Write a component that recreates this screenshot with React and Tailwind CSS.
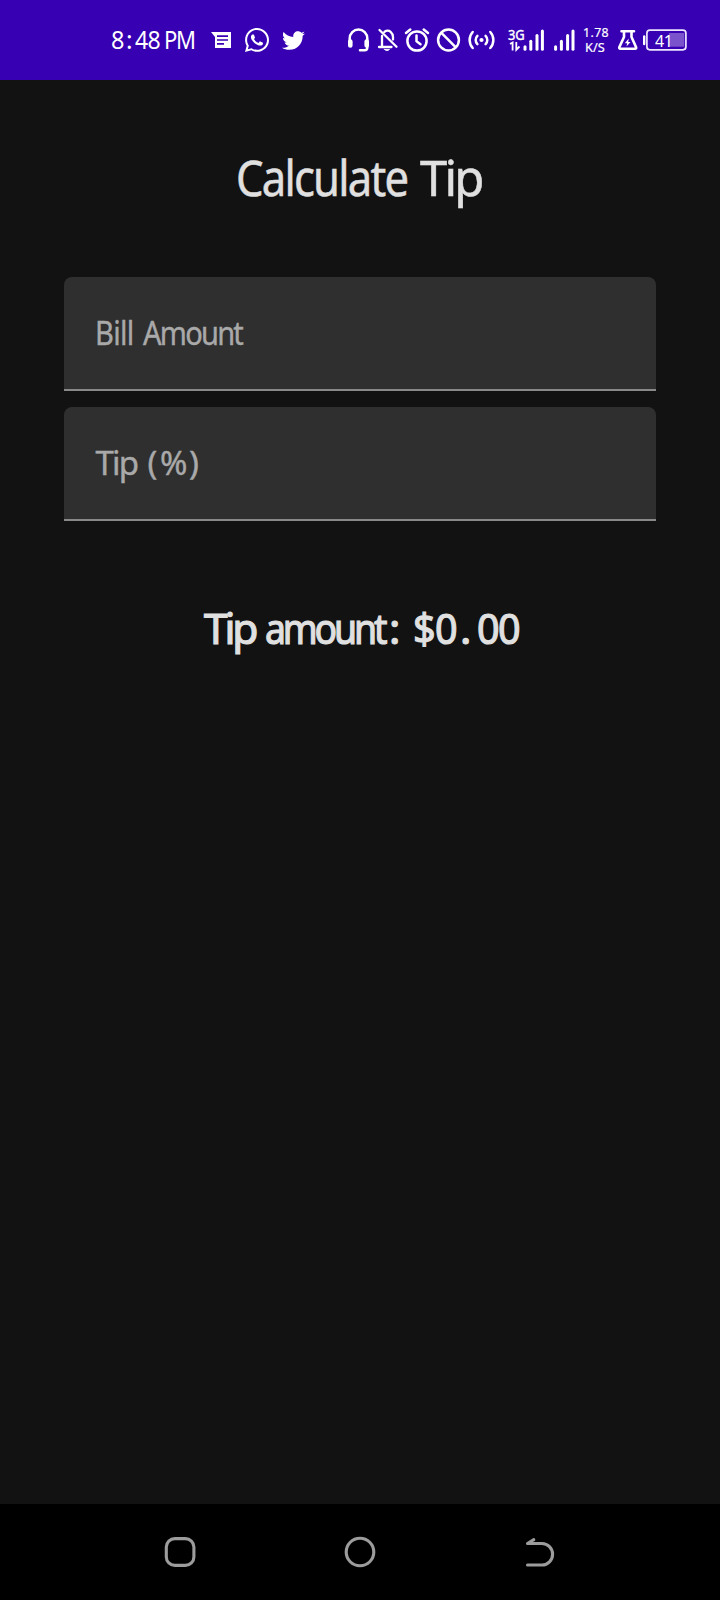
import React from "react";
import { FaWhatsapp, FaTwitter } from "react-icons/fa";

// A text run in a fixed slot, condensed horizontally.
function Run({ slot, fit = "", children }) {
  return (
    <span className={`inline-block shrink-0 whitespace-nowrap ${slot}`}>
      <span className={`inline-block origin-left ${fit}`}>{children}</span>
    </span>
  );
}

// Status bar glyph; x is the left edge of the tile on the 720px bar.
function Glyph({ x, w, className = "", children }) {
  return (
    <svg
      width={w}
      height="40"
      viewBox={`${x} 20 ${w} 40`}
      fill="none"
      stroke="#fff"
      strokeWidth="2.5"
      strokeLinecap="round"
      strokeLinejoin="round"
      className={`block shrink-0 ${className}`}
    >
      {children}
    </svg>
  );
}

function Bars({ xs }) {
  const tops = [46.8, 41.3, 35.6, 31];
  return xs.map((x, i) => <path key={x} d={`M${x} ${tops[i]}V49.3`} strokeWidth="3" />);
}

function StatusBar() {
  return (
    <header className="flex h-20 shrink-0 items-center bg-[#3700b3] pl-[111px] text-white">
      <div className="-mt-px flex w-[97px] text-[24.5px] leading-10">
        <Run slot="w-[15px]" fit="scale-x-[0.96]">8</Run>
        <Run slot="w-[8.5px]">:</Run>
        <Run slot="w-[29.5px]" fit="scale-x-[0.94] tracking-[-0.8px]">48</Run>
        <Run slot="w-[40px]" fit="scale-x-[0.9] tracking-[-1.5px]">PM</Run>
      </div>
      <Glyph x={208} w={37}>
        <path d="M211 32H231V48H215V37Z" fill="#fff" stroke="none" />
        <path d="M217 36.2H228M217 40H228M217 43.8H224" stroke="#3700b3" strokeWidth="1.7" strokeLinecap="butt" />
      </Glyph>
      <FaWhatsapp viewBox="0 32 448 448" className="h-6 w-6 shrink-0" />
      <FaTwitter className="ml-[13px] h-[23px] w-[23px] shrink-0" />
      <Glyph x={346} w={28} className="ml-[41px]">
        <path d="M349.7 43V38.5A8.8 9 0 0 1 367.3 38.5V47.5Q367.3 50.3 364.5 50.3H360" />
        <path d="M350.3 41.5V45.5M366.7 41.5V45.5" strokeWidth="4.6" />
      </Glyph>
      <Glyph x={374} w={29}>
        <path d="M382 36V46.5M379 47H391.5M384.5 31.8C389.5 28.5 393 33.5 393 37V39.5M379.5 30L396.5 46.8" strokeWidth="2.3" />
        <path d="M384.5 49.5H389.5Q387 52 384.5 49.5Z" fill="#fff" strokeWidth="0.8" />
      </Glyph>
      <Glyph x={403} w={30}>
        <circle cx="417" cy="41" r="9.6" />
        <path d="M406 33L410.3 29.5M428 33L423.7 29.5M416.5 35.5V41.3L420.5 44.2" />
      </Glyph>
      <Glyph x={433} w={32}>
        <circle cx="448.5" cy="40" r="10.4" />
        <path d="M441.4 32.9L455.6 47.1" />
      </Glyph>
      <Glyph x={465} w={43}>
        <circle cx="481.5" cy="40" r="2.1" fill="#fff" stroke="none" />
        <path d="M477.4 35.8A6 6 0 0 0 477.4 44.2M485.6 35.8A6 6 0 0 1 485.6 44.2M472.7 32A12 12 0 0 0 472.7 48M490.3 32A12 12 0 0 1 490.3 48" />
      </Glyph>
      <div className="flex w-[14px] shrink-0 flex-col">
        <span className="flex h-5 text-[14px] leading-[10px]">
          <Run slot="w-[16px]" fit="scale-x-[0.92] [-webkit-text-stroke:0.4px]">3G</Run>
        </span>
        <svg width="14" height="10" viewBox="508 41 14 10" fill="none" stroke="#fff" strokeWidth="1.8" className="-mt-[9px] overflow-visible">
          <path d="M510 44L512.6 42.5V50.5M516.3 42V49.8L519.5 46.5" />
        </svg>
      </div>
      <Glyph x={522} w={62}>
        <Bars xs={[525, 530.8, 537, 542.4]} />
        <Bars xs={[555.6, 561.4, 567.6, 573]} />
      </Glyph>
      <div className="-ml-px flex w-[31px] shrink-0 flex-col text-[13px] leading-[15px] [-webkit-text-stroke:0.2px]">
        <Run slot="w-[30px]" fit="scale-x-[0.95] tracking-[0.4px]">1.78</Run>
        <Run slot="w-[28px] ml-[2px]" fit="scale-x-[0.98]">K/S</Run>
      </div>
      <Glyph x={614} w={28}>
        <path d="M621.5 31.3H634M624 31.5V37L619.3 47.3Q619 48.7 620.3 48.7H635.2Q636.5 48.7 636.1 47.3L631.5 37V31.5" strokeWidth="2.6" />
        <path d="M628.8 38.5L624.8 43.2H627.2L626.5 46.6L630.5 42H628.2Z" fill="#fff" stroke="none" />
      </Glyph>
      <div className="relative h-10 w-[46px] shrink-0">
        <Glyph x={642} w={46}>
          <path d="M644.2 36.5V44" strokeWidth="2.4" />
          <rect x="669" y="33" width="15.3" height="13.7" fill="#7a52cc" stroke="none" />
          <rect x="646.9" y="30.2" width="39" height="19.6" rx="3" strokeWidth="1.7" stroke="#eee5ff" />
        </Glyph>
        <span className="absolute left-[13px] top-[1px] text-[17px] leading-10">
          <Run slot="w-[18px]" fit="scale-x-[0.94] tracking-[-0.5px]">41</Run>
        </span>
      </div>
    </header>
  );
}

function Field({ children }) {
  return (
    <label className="flex h-[114px] items-center rounded-t-lg border-b-2 border-[#898989] bg-[#2f2f2f] text-[33px] leading-[40px] text-[#a9a9a9] [-webkit-text-stroke:0.4px_#a9a9a9]">
      {children}
    </label>
  );
}

function NavBar() {
  return (
    <nav className="flex h-24 shrink-0 items-center justify-between bg-black px-[160px] text-[#9c9c9c]">
      <svg width="40" height="40" viewBox="160 1532 40 40" fill="none" stroke="currentColor" strokeWidth="3.1">
        <rect x="166.3" y="1538.6" width="27.6" height="26.8" rx="8.5" />
      </svg>
      <svg width="40" height="40" viewBox="340 1532 40 40" fill="none" stroke="currentColor" strokeWidth="3.1">
        <circle cx="360" cy="1552" r="13.8" />
      </svg>
      <svg width="40" height="40" viewBox="520 1532 40 40" fill="none" stroke="currentColor" strokeWidth="3.1" strokeLinecap="round" strokeLinejoin="round">
        <path d="M527.5 1565H542A10.6 10.75 0 0 0 542 1543.5H527.5L533.8 1539.7" />
      </svg>
    </nav>
  );
}

export default function App() {
  return (
    <div className="flex h-[1600px] w-[720px] flex-col overflow-hidden bg-[#121212] font-['Noto_Sans',sans-serif]">
      <StatusBar />
      <main className="flex flex-1 flex-col">
        <h1 className="mt-[67px] flex h-[60px] pl-[235.5px] text-[49px] leading-[60px] text-[#e0e0e0] [-webkit-text-stroke:0.5px_#e0e0e0]">
          <Run slot="w-[184.5px]" fit="scale-x-[0.89] tracking-[-2px]">Calculate</Run>
          <Run slot="w-[64px]" fit="tracking-[-2.8px]">Tip</Run>
        </h1>
        <form className="mx-16 mt-[70px] flex flex-col gap-4">
          <Field>
            <Run slot="ml-[31px] w-[48px]" fit="scale-x-[0.88] tracking-[-0.8px]">Bill</Run>
            <Run slot="w-[104px]" fit="scale-x-[0.88] tracking-[-2px]">Amount</Run>
          </Field>
          <Field>
            <Run slot="ml-[31.5px] w-[52px]" fit="tracking-[-1.8px]">Tip</Run>
            <Run slot="w-[12.5px]">(</Run>
            <Run slot="w-[29px]">%</Run>
            <Run slot="w-[12px]">)</Run>
          </Field>
        </form>
        <p className="mt-[82px] flex h-[50px] pl-[204px] text-[42.5px] leading-[50px] text-[#e0e0e0] [-webkit-text-stroke:1.2px_#e0e0e0]">
          <Run slot="w-[61px]" fit="tracking-[-3.2px]">Tip</Run>
          <Run slot="w-[124px]" fit="scale-x-[0.88] tracking-[-3.6px]">amount</Run>
          <Run slot="w-[24px]">:</Run>
          <Run slot="w-[21.5px]" fit="scale-x-[0.93]">$</Run>
          <Run slot="w-[25.5px]" fit="scale-x-[0.93]">0</Run>
          <Run slot="w-[17px]">.</Run>
          <Run slot="w-[46px]" fit="scale-x-[0.93] tracking-[-1.8px]">00</Run>
        </p>
      </main>
      <NavBar />
    </div>
  );
}
